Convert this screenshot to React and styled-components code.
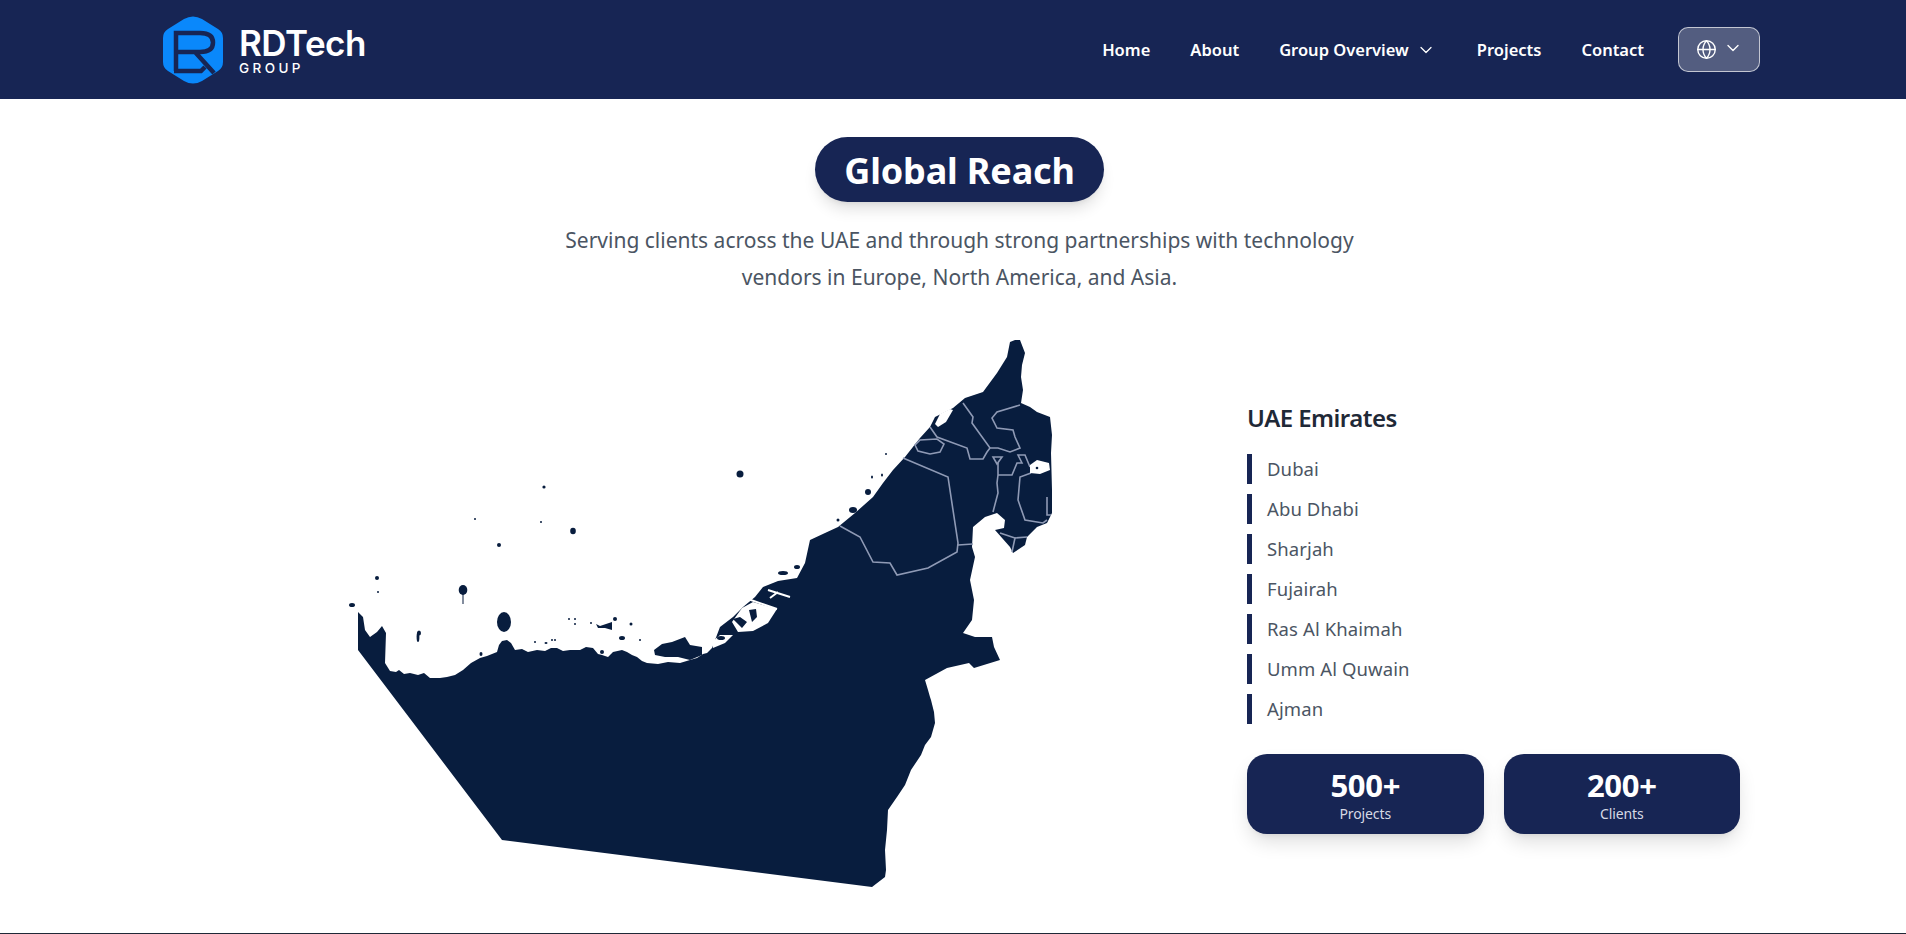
import React from "react";
import styled, { createGlobalStyle } from "styled-components";
import { Globe, ChevronDown } from "lucide-react";

const navy = "#172554";
const mapFill = "#081d3e";

const navLinks = ["Home", "About", "Group Overview", "Projects", "Contact"];
const emirates = ["Dubai", "Abu Dhabi", "Sharjah", "Fujairah", "Ras Al Khaimah", "Umm Al Quwain", "Ajman"];
const stats = [
  { value: "500+", label: "Projects" },
  { value: "200+", label: "Clients" }
];

// outline traced in page pixels, svg viewBox starts at 340,330
const mainland =
  "M1010 342 L1015 340 L1020 340 L1025 353 L1022 365 L1021 377 L1023 390 L1021 403 L1030 407 L1037 412 L1050 417 L1052 435 L1051 453 L1052 490 L1052 513 L1047 523 L1037 527 L1027 537 L1025 545 L1013 553 L1010 547 L995 530 L1004 528 L1005 520 L997 513 L985 517 L973 527 L972 547 L975 557 L970 580 L974 600 L972 620 L963 633 L975 637 L992 637 L994 647 L1000 660 L974 668 L969 663 L947 668 L925 680 L928 690 L930 697 L931 700 L934 712 L935 723 L931 737 L925 745 L921 755 L911 770 L905 785 L897 797 L888 810 L887 830 L885 850 L886 870 L885 877 L872 887 L502 840 L358 650 L358 612 L363 617 L365 630 L370 637 L377 632 L382 626 L386 633 L385 663 L390 671 L396 672 L399 670 L404 674 L410 673 L418 675 L424 673 L430 678 L440 678 L447 677 L455 675 L463 670 L471 663 L480 658 L487 656 L497 652 L499 645 L502 641 L507 640 L511 643 L515 650 L522 649 L528 652 L537 650 L545 651 L551 648 L557 648 L563 651 L570 650 L580 650 L586 647 L593 648 L598 654 L602 655 L608 657 L613 652 L622 650 L627 652 L632 655 L637 657 L642 661 L647 663 L658 664 L668 662 L680 663 L690 660 L697 658 L703 654 L707 653 L712 648 L720 627 L733 617 L743 607 L755 597 L763 587 L778 581 L797 578 L805 563 L810 540 L825 533 L838 527 L855 513 L873 497 L883 483 L893 470 L905 457 L920 438 L930 427 L935 417 L953 408 L965 398 L983 392 L997 373 L1007 357 Z";

const borders = [
  "M840 526 L860 537 L873 562 L890 563 L897 575 L928 568 L957 552 L958 543 L948 477 L903 458",
  "M958 545 L973 544",
  "M963 403 L973 417 L972 423 L990 448 L998 448 L1010 452 L1020 448 L1015 437 L1013 430 L997 428 L992 418 L997 412 L1020 405",
  "M930 427 L937 437 L967 448 L970 459 L983 459 L987 452 L990 448",
  "M915 445 L920 440 L937 439 L944 444 L940 452 L930 454 L918 451 Z",
  "M993 457 L1002 457 L997 464 Z",
  "M998 463 L998 475 L997 483 L998 493 L993 512",
  "M998 475 L1012 475 L1017 463 L1022 463 L1018 455 L1025 455 L1030 467",
  "M1031 473 L1020 477 L1018 500 L1025 520 L1043 523 L1047 520",
  "M1047 497 L1047 515 L1051 515",
  "M1000 533 L1015 538 L1012 552",
  "M1015 538 L1027 537"
];

// small islands off the coast: cx, cy, rx, ry
const islands = [
  [740, 474, 3.5, 3.5], [544, 487, 1.6, 1.6], [475, 519, 1, 1], [541, 522, 1, 1], [499, 545, 2, 2],
  [573, 531, 2.8, 3.2], [377, 578, 2, 2], [378, 592, 1, 1], [352, 605, 3, 2], [463, 590, 4.3, 5],
  [504, 622, 7, 10], [575, 619, 1, 1], [575, 624, 1, 1], [569, 619, 1, 1], [615, 619, 2, 2],
  [591, 623, 1, 1], [418, 637, 1.4, 5], [419, 633, 2, 2.5], [631, 624, 1.5, 1.5], [622, 638, 3, 2],
  [552, 640, 1, 1], [535, 642, 1, 1], [546, 643, 1.5, 1], [555, 640, 1, 1], [481, 654, 1.5, 2],
  [602, 652, 2, 2], [640, 640, 1, 1], [886, 454, 1, 1], [872, 477, 1, 1.5], [868, 492, 3, 3],
  [853, 510, 4, 3], [838, 520, 1.5, 1.5], [882, 475, 1, 1.5], [783, 573, 5, 2], [797, 567, 3, 2]
];

const GlobalStyle = createGlobalStyle`
  html, body {
    margin: 0;
    background: #fff;
    font-family: "Noto Sans", "Open Sans", sans-serif;
  }
`;

const Page = styled.div`
  height: 934px;
  box-sizing: border-box;
  border-bottom: 1px solid #1f2937;
  overflow: hidden;
`;

const Header = styled.header`
  height: 99px;
  background: ${navy};
  display: flex;
  align-items: center;
  justify-content: space-between;
  padding: 0 146px 0 163px;
`;

const Brand = styled.div`
  display: flex;
  align-items: center;
  gap: 16px;
`;

const BrandText = styled.div`
  display: flex;
  flex-direction: column;
  color: #fff;
  font-family: Inter, sans-serif;
`;

const BrandName = styled.span`
  font-size: 35px;
  line-height: 36px;
  font-weight: 600;
  letter-spacing: -0.5px;
`;

const BrandSub = styled.span`
  font-size: 13.5px;
  line-height: 14px;
  font-weight: 500;
  letter-spacing: 3.4px;
`;

const Nav = styled.nav`
  display: flex;
  align-items: center;
  gap: 40px;
`;

const NavLink = styled.a`
  display: flex;
  align-items: center;
  gap: 7px;
  color: #fff;
  font-size: 16.5px;
  font-weight: 600;
  margin-right: ${p => (p.$hasMenu ? "1px" : "0")};
`;

const LangButton = styled.button`
  width: 82px;
  height: 45px;
  display: flex;
  align-items: center;
  justify-content: center;
  gap: 6px;
  padding: 0;
  color: #fff;
  background: rgba(255, 255, 255, 0.26);
  border: 1px solid rgba(255, 255, 255, 0.65);
  border-radius: 10px;
  margin-left: -6px;

  svg:last-child {
    margin-top: -3px;
  }
`;

const Section = styled.main`
  display: flex;
  flex-direction: column;
  align-items: center;
  padding: 38px 0 0 13px;
`;

const TitlePill = styled.h2`
  margin: 0;
  padding: 2px 29px 0;
  box-sizing: border-box;
  height: 65px;
  display: flex;
  align-items: center;
  background: ${navy};
  color: #fff;
  font-size: 36px;
  font-weight: 700;
  letter-spacing: -0.15px;
  border-radius: 33px;
  box-shadow: 0 10px 15px -3px rgba(0, 0, 0, 0.12), 0 4px 6px -4px rgba(0, 0, 0, 0.1);
`;

const Subtitle = styled.p`
  margin: 20px 0 0;
  width: 860px;
  text-align: center;
  color: #4b5563;
  font-size: 21px;
  line-height: 37px;
`;

const Content = styled.div`
  align-self: stretch;
  display: flex;
  align-items: flex-start;
  padding-left: 327px;
  margin-top: 34px;
`;

const MapArt = styled.svg`
  flex: none;
  width: 907px;
  height: 570px;
  display: block;
`;

const Side = styled.aside`
  width: 493px;
  padding-top: 72px;
`;

const SideTitle = styled.h3`
  margin: 0 0 20px;
  color: #1f2937;
  font-size: 24px;
  line-height: 32px;
  font-weight: 600;
  letter-spacing: -0.55px;
`;

const EmirateList = styled.ul`
  list-style: none;
  margin: 0;
  padding: 0;
  display: flex;
  flex-direction: column;
  gap: 10px;
`;

const EmirateItem = styled.li`
  height: 30px;
  box-sizing: border-box;
  border-left: 5px solid ${navy};
  padding-left: 15px;
  color: #4b5563;
  font-size: 18.5px;
  line-height: 30px;
  letter-spacing: 0.1px;
`;

const StatRow = styled.div`
  display: grid;
  grid-template-columns: 1fr 1fr;
  gap: 20px;
  margin-top: 30px;
`;

const StatCard = styled.div`
  height: 80px;
  box-sizing: border-box;
  background: ${navy};
  border-radius: 20px;
  display: flex;
  flex-direction: column;
  align-items: center;
  justify-content: center;
  padding-top: 2px;
  color: #fff;
  box-shadow: 0 10px 20px -3px rgba(0, 0, 0, 0.14), 0 4px 6px -4px rgba(0, 0, 0, 0.1);
`;

const StatValue = styled.div`
  font-size: 31px;
  line-height: 37px;
  font-weight: 700;
  letter-spacing: -0.3px;
`;

const StatLabel = styled.div`
  font-size: 14px;
  line-height: 20px;
  color: #d6d9e4;
  letter-spacing: -0.1px;
`;

const LogoMark = () => (
  <svg width="60" height="68" viewBox="0 0 60 68" aria-hidden="true">
    <path
      d="M21 3 Q30 -2 39 3 L55 13 Q60 16 60 22 L60 46 Q60 52 55 55 L39 65 Q30 70 21 65 L5 55 Q0 52 0 46 L0 22 Q0 16 5 13 Z"
      fill="#0a88fb"
    />
    <path
      d="M13 55 L13 17 L37 17 Q50 17 50 26.5 Q50 36 37 36 L15 36 M32 36 L51 57 M11 55 L38 55 L42 51"
      fill="none"
      stroke={navy}
      strokeWidth="4.5"
    />
  </svg>
);

const UaeMap = () => (
  <MapArt viewBox="340 330 907 570" aria-hidden="true">
    <path d={mainland} fill={mapFill} />
    {borders.map(d => (
      <path key={d} d={d} fill="none" stroke="#8f9ab5" strokeWidth="1.6" />
    ))}
    {/* inlets and lagoons cut out of the coast */}
    <path d="M1030 465 L1037 460 L1049 463 L1050 470 L1040 474 L1030 473 Z" fill="#fff" />
    <circle cx="1037" cy="468" r="1.3" fill={mapFill} />
    <path d="M935 424 L940 414 L950 409 L953 410 L946 422 L938 427 Z" fill="#fff" />
    <path d="M732 622 L742 608 L753 602 L777 609 L768 623 L753 631 L738 632 Z" fill="#fff" />
    <path d="M749 610 L756 609 L757 617 L752 622 Z M733 619 L740 617 L747 622 L742 628 Z" fill={mapFill} />
    <path d="M712 642 L720 635 L733 635 L725 643 L713 648 Z" fill="#fff" />
    <ellipse cx="721" cy="638" rx="4" ry="2" fill={mapFill} />
    <path d="M748 599 L777 609 M768 590 L790 597 M770 598 L778 592" stroke="#fff" strokeWidth="2" fill="none" />
    {islands.map(([cx, cy, rx, ry]) => (
      <ellipse key={`${cx}-${cy}`} cx={cx} cy={cy} rx={rx} ry={ry} fill={mapFill} />
    ))}
    <path d="M462.5 592 L463.5 592 L463.5 604 L462.5 604 Z" fill={mapFill} />
    <path d="M654 650 L662 644 L672 642 L685 637 L690 645 L702 647 L702 655 L690 660 L678 657 L665 657 L655 655 Z" fill={mapFill} />
    <path d="M596 624 L600 626 L612 622 L612 630 L605 628 L598 628 Z" fill={mapFill} />
  </MapArt>
);

const App = () => (
  <Page>
    <GlobalStyle />
    <Header>
      <Brand>
        <LogoMark />
        <BrandText>
          <BrandName>RDTech</BrandName>
          <BrandSub>GROUP</BrandSub>
        </BrandText>
      </Brand>
      <Nav>
        {navLinks.map(label => (
          <NavLink key={label} $hasMenu={label === "Group Overview"}>
            {label}
            {label === "Group Overview" && <ChevronDown size={20} strokeWidth={1.5} />}
          </NavLink>
        ))}
        <LangButton aria-label="Language">
          <Globe size={21} strokeWidth={1.6} />
          <ChevronDown size={20} strokeWidth={1.6} />
        </LangButton>
      </Nav>
    </Header>
    <Section>
      <TitlePill>Global Reach</TitlePill>
      <Subtitle>
        Serving clients across the UAE and through strong partnerships with technology
        <br />
        vendors in Europe, North America, and Asia.
      </Subtitle>
      <Content>
        <UaeMap />
        <Side>
          <SideTitle>UAE Emirates</SideTitle>
          <EmirateList>
            {emirates.map(name => (
              <EmirateItem key={name}>{name}</EmirateItem>
            ))}
          </EmirateList>
          <StatRow>
            {stats.map(({ value, label }) => (
              <StatCard key={label}>
                <StatValue>{value}</StatValue>
                <StatLabel>{label}</StatLabel>
              </StatCard>
            ))}
          </StatRow>
        </Side>
      </Content>
    </Section>
  </Page>
);

export default App;
